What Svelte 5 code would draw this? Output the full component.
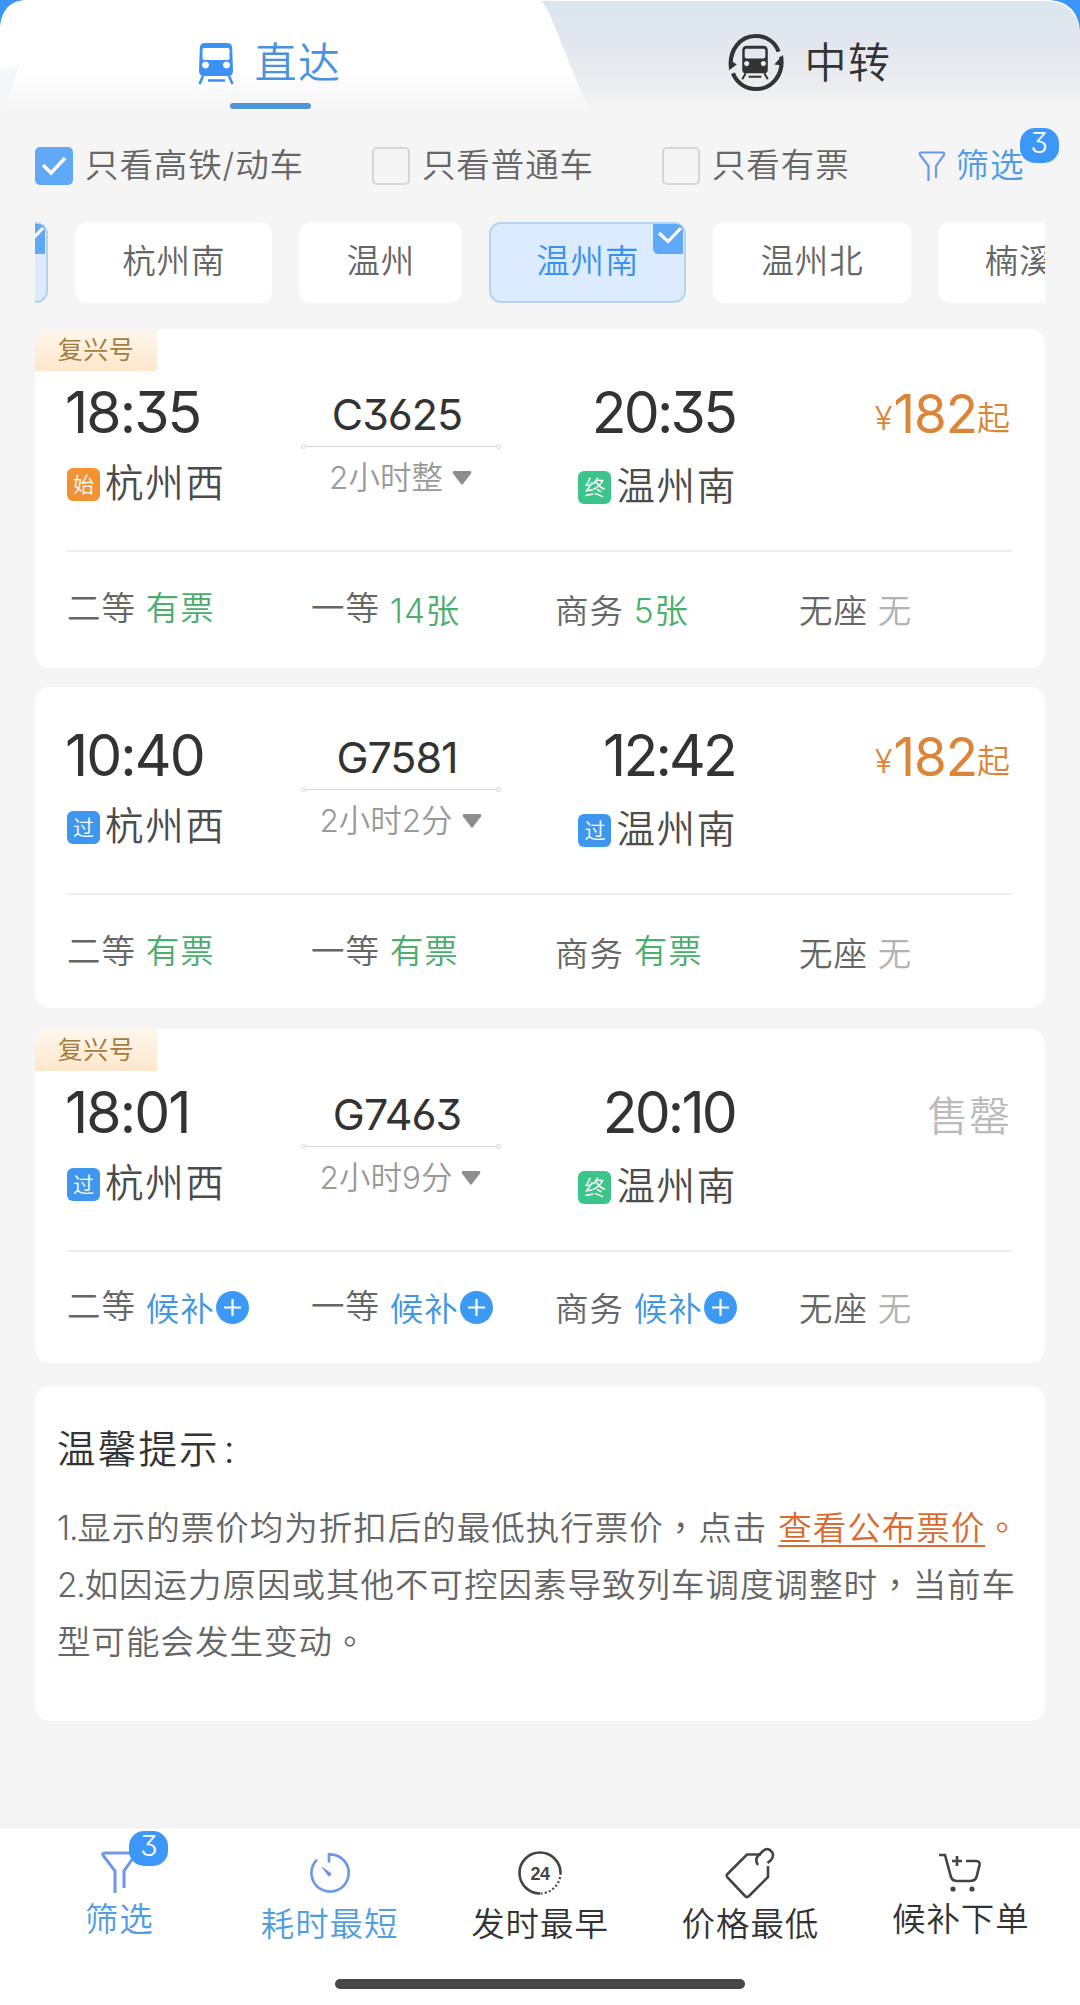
<script>
	const filters = [
		{ label: '只看高铁/动车', checked: true },
		{ label: '只看普通车', checked: false },
		{ label: '只看有票', checked: false },
	];

	const stations = [
		{ name: '杭州西', selected: true },
		{ name: '杭州南' },
		{ name: '温州' },
		{ name: '温州南', selected: true },
		{ name: '温州北' },
		{ name: '楠溪江' },
	];

	const badges = {
		start: '始',
		end: '终',
		pass: '过',
	};

	const trains = [
		{
			tag: '复兴号',
			number: 'C3625',
			duration: '2小时整',
			from: { time: '18:35', name: '杭州西', type: 'start' },
			to: { time: '20:35', name: '温州南', type: 'end' },
			price: 182,
			seats: [
				{ name: '二等', left: '有票', state: 'ok' },
				{ name: '一等', left: '14张', state: 'ok' },
				{ name: '商务', left: '5张', state: 'ok' },
				{ name: '无座', left: '无', state: 'none' },
			],
		},
		{
			number: 'G7581',
			duration: '2小时2分',
			from: { time: '10:40', name: '杭州西', type: 'pass' },
			to: { time: '12:42', name: '温州南', type: 'pass' },
			price: 182,
			seats: [
				{ name: '二等', left: '有票', state: 'ok' },
				{ name: '一等', left: '有票', state: 'ok' },
				{ name: '商务', left: '有票', state: 'ok' },
				{ name: '无座', left: '无', state: 'none' },
			],
		},
		{
			tag: '复兴号',
			number: 'G7463',
			duration: '2小时9分',
			from: { time: '18:01', name: '杭州西', type: 'pass' },
			to: { time: '20:10', name: '温州南', type: 'end' },
			price: null,
			seats: [
				{ name: '二等', left: '候补', state: 'wait' },
				{ name: '一等', left: '候补', state: 'wait' },
				{ name: '商务', left: '候补', state: 'wait' },
				{ name: '无座', left: '无', state: 'none' },
			],
		},
	];

	const tools = [
		{ icon: 'filter', label: '筛选', active: true, raised: true, badge: 3 },
		{ icon: 'timer', label: '耗时最短', active: true },
		{ icon: 'clock', label: '发时最早' },
		{ icon: 'tag', label: '价格最低' },
		{ icon: 'cart', label: '候补下单', raised: true },
	];
</script>

<div class="page">
	<header class="tabs">
		<svg class="tabs-bg" width="1080" height="114" viewBox="0 0 1080 114">
			<defs>
				<linearGradient id="tab-off" x1="0" y1="0" x2="0" y2="1">
					<stop offset="0" stop-color="#dae6ef" />
					<stop offset="0.3" stop-color="#e1e6ee" />
					<stop offset="0.65" stop-color="#e9ebef" />
					<stop offset="1" stop-color="#f5f5f5" />
				</linearGradient>
				<linearGradient id="tab-on" x1="0" y1="0" x2="0" y2="1">
					<stop offset="0.6" stop-color="#ffffff" />
					<stop offset="1" stop-color="#f5f5f5" />
				</linearGradient>
			</defs>
			<rect width="1080" height="60" fill="#3b95f8" />
			<path d="M0 114V28Q2 0 28 0H1050Q1078 2 1080 32V114Z" fill="#fff" />
			<path d="M500 114V1H1046Q1076 2 1080 34V114Z" fill="url(#tab-off)" />
			<path d="M0 114V28Q2 0 28 0H540Q547 6 552 20L590 114Z" fill="url(#tab-on)" />
			<path d="M0 70L20 64L2 114H0Z" fill="#f1f3f6" opacity="0.6" />
		</svg>
		<div class="tab active">
			<svg class="train" width="36" height="42" viewBox="0 0 36 42">
				<path fill="currentColor" fill-rule="evenodd" d="M7 0h22q5 0 5.200 5L35 28q0 5-5 5H6q-5 0-5-5L1.800 5Q2 0 7 0ZM6 5Q4.500 5 4.500 7V15Q4.500 17 6.500 17H29.500Q31.500 17 31.500 15V7Q31.500 5 30 5ZM7.500 18.500a3.500 3.500 0 1 0 .01 0ZM28.500 18.500a3.500 3.500 0 1 0 .01 0Z" />
				<path stroke="currentColor" stroke-width="2.600" d="M5 33L1.500 41M31 33L34.500 41M10 37.500H27" />
			</svg>
			<span>直达</span>
		</div>
		<div class="tab transfer">
			<svg width="56" height="59" viewBox="0 0 57 60">
				<g fill="none" stroke="currentColor" stroke-width="4.200">
					<path d="M3 35C1 18 12 3 28 3C39 3 48 9 51.500 19" />
					<path d="M54 24C57 42 45 57 28.500 57C18 57 9 51 5 41" />
				</g>
				<path fill="currentColor" d="M1 38V27L9 32ZM56 22V33L47 32Z" />
				<path fill="currentColor" fill-rule="evenodd" d="M19 13H36Q40 13 40.500 17V37Q40.500 41 36.500 41H18.500Q14.500 41 14.500 37V17Q15 13 19 13ZM18.500 16Q17 16 17 18V24Q17 26 19 26H36Q38 26 38 24V18Q38 16 36.500 16ZM19 28.500a2.600 2.600 0 1 0 .01 0ZM36 28.500a2.600 2.600 0 1 0 .01 0Z" />
				<path stroke="currentColor" stroke-width="2" d="M18 41L14.500 47M37 41L40.500 47M21 44.500H34" />
			</svg>
			<span>中转</span>
		</div>
	</header>

	<div class="filters">
		{#each filters as filter}
			<label class="filter">
				<span class="box" class:checked={filter.checked}>
					{#if filter.checked}
						<svg width="38" height="38" viewBox="0 0 38 38"><path d="M8 18L16 26L30 11" fill="none" stroke="#fff" stroke-width="3.400" /></svg>
					{/if}
				</span>
				{filter.label}
			</label>
		{/each}
		<div class="more">
			<svg width="28" height="31" viewBox="0 0 28 31"><path d="M10.500 30V15L2 4Q1 1.500 3.500 1.500H24.500Q27 1.500 26 4L18 15V27" fill="none" stroke="#6d97ea" stroke-width="2.200" /></svg>
			<span>筛选</span>
			<i class="count">3</i>
		</div>
	</div>

	<div class="chips">
		{#each stations as station}
			<div class="chip" class:selected={station.selected}>
				{station.name}
				{#if station.selected}
					<svg class="corner" width="30" height="30" viewBox="0 0 30 30">
						<path d="M0 0H24Q30 1 30 7V30H6Q0 30 0 24Z" fill="#60a8f8" />
						<path d="M6 9L15 17.500L28 4" fill="none" stroke="#fff" stroke-width="3.200" />
					</svg>
				{/if}
			</div>
		{/each}
	</div>

	<main>
		{#each trains as train}
			<section class="card train-card" class:tagged={train.tag}>
				{#if train.tag}
					<div class="tag">{train.tag}</div>
				{/if}
				<div class="trip">
					<div class="stop">
						<div class="time">{train.from.time}</div>
						<div class="station">
							<i class="badge {train.from.type}">{badges[train.from.type]}</i>{train.from.name}
						</div>
					</div>
					<div class="route">
						<div class="number">{train.number}</div>
						<div class="line"></div>
						<div class="duration">
							{train.duration}
							<svg width="20" height="14" viewBox="0 0 20 14"><path d="M1.500 0H18.500Q20 1 19 2.500L11 13Q10 14 9 13L1 2.500Q0 1 1.500 0Z" fill="#8e8e8e" /></svg>
						</div>
					</div>
					<div class="stop to">
						<div class="time">{train.to.time}</div>
						<div class="station">
							<i class="badge {train.to.type}">{badges[train.to.type]}</i>{train.to.name}
						</div>
					</div>
					<div class="fare">
						{#if train.price}
							<div class="price"><small>¥</small><b>{train.price}</b><small>起</small></div>
						{:else}
							<div class="sold-out">售罄</div>
						{/if}
					</div>
				</div>
				<div class="seats">
					{#each train.seats as seat}
						<div class="seat">
							<span class:low={seat.name === '商务' || seat.name === '无座'}>{seat.name}</span>
							<span class={seat.state} class:low={seat.left !== '有票'}>{seat.left}</span>
							{#if seat.state === 'wait'}
								<svg class="plus" width="33" height="33" viewBox="0 0 33 33">
									<circle cx="16.500" cy="16.500" r="16.500" fill="#3d99f6" />
									<path d="M16.500 8V25M8 16.500H25" stroke="#fff" stroke-width="2.200" />
								</svg>
							{/if}
						</div>
					{/each}
				</div>
			</section>
		{/each}

		<section class="card tips">
			<h2>温馨提示<span>:</span></h2>
			<p><span class="num">1.</span>显示的票价均为折扣后的最低执行票价<span class="punct">，</span>点击<a href="#fares">查看公布票价</a><span class="punct stop-mark">。</span></p>
			<p><span class="num">2.</span>如因运力原因或其他不可控因素导致列车调度调整时<span class="punct">，</span>当前车型可能会发生变动<span class="punct">。</span></p>
		</section>
	</main>

	<footer>
		<nav>
			{#each tools as tool}
				<div class="tool" class:active={tool.active} class:raised={tool.raised}>
					<div class="tool-icon">
						{#if tool.icon === 'filter'}
							<svg class="funnel" width="36" height="43" viewBox="0 0 36 43"><path d="M14 42V20L2.500 5Q0.500 2 4 2H32Q35.500 2 33.500 5L23 20V37" fill="none" stroke="#6d97ea" stroke-width="3" /></svg>
						{:else if tool.icon === 'timer'}
							<svg class="timer" width="42" height="42" viewBox="0 0 44 44">
								<path d="M9.500 8A19.500 19.500 0 1 0 22 2.500V11" fill="none" stroke="#6d97ea" stroke-width="2.800" />
								<path d="M15 16L24.500 23L22 25.500Z" fill="#6d8fe0" stroke="#6d8fe0" />
							</svg>
						{:else if tool.icon === 'clock'}
							<svg width="44" height="44" viewBox="0 0 44 44">
								<path d="M42.500 22A20.500 20.500 0 1 0 22 42.500" fill="none" stroke="#444" stroke-width="2.600" />
								<path d="M42.500 22A20.500 20.500 0 0 1 22 42.500" fill="none" stroke="#444" stroke-width="2.200" stroke-dasharray="2 2.200" />
								<text x="22" y="28.500" text-anchor="middle">24</text>
							</svg>
						{:else if tool.icon === 'tag'}
							<svg width="50" height="52" viewBox="0 0 50 52">
								<g fill="none" stroke="#444" stroke-width="2.600">
									<path d="M36 7.500H22L2.500 27Q1 28.500 2.500 30.500L20 49Q22 51 24 49L43 30V19" />
									<path d="M33 18Q29 12 34 8L38 4Q43 0 47 5Q49.500 9 46 13L42.500 16" />
								</g>
							</svg>
						{:else}
							<svg width="44" height="40" viewBox="0 0 44 40">
								<g fill="none" stroke="#444" stroke-width="2.600">
									<path d="M0 2H6L12 24Q13.500 28 18 28H31Q36 28 37.500 24L40.500 12Q41 8 37.500 8H27M18 3V13M13 8H23" />
								</g>
								<circle cx="14" cy="36" r="2.600" fill="#444" />
								<circle cx="33" cy="36" r="2.600" fill="#444" />
							</svg>
						{/if}
						{#if tool.badge}
							<i class="count">{tool.badge}</i>
						{/if}
					</div>
					<div class="tool-label">{tool.label}</div>
				</div>
			{/each}
		</nav>
		<div class="home-bar"></div>
	</footer>
</div>

<style>
	:global(body) {
		background: #f5f5f5;
	}

	.page {
		width: 1080px;
		height: 2005px;
		display: flex;
		flex-direction: column;
		overflow: hidden;
		background: #f5f5f5;
		color: #666;
		font-family: Inter, "Noto Sans CJK SC", sans-serif;
		font-size: 33.5px;
		font-weight: 350;
		letter-spacing: 0.9px;
		line-height: 1;
	}

	i {
		font-style: normal;
	}

	svg {
		display: block;
		flex: none;
	}

	/* tabs */
	.tabs {
		position: relative;
		display: flex;
		height: 114px;
	}

	.tabs-bg {
		position: absolute;
		inset: 0;
	}

	.tab {
		position: relative;
		width: 540px;
		height: 109px;
		box-sizing: border-box;
		padding: 16px 0 0;
		display: flex;
		justify-content: center;
		align-items: center;
		gap: 20px;
		font-size: 42px;
		letter-spacing: 1.5px;
		color: #333;
	}

	.tab svg {
		margin-top: 2px;
	}

	.tab span {
		margin-top: 1px;
	}

	.tab.active {
		color: #4893e0;
	}

	.tab.active::after {
		content: "";
		position: absolute;
		left: 230px;
		bottom: 0;
		width: 81px;
		height: 6px;
		border-radius: 3px;
		background: #4f95da;
	}

	.tab.active .train {
		color: #3d90f4;
	}

	.tab.transfer svg {
		margin-top: 0;
	}

	/* filters */
	.filters {
		display: flex;
		align-items: center;
		height: 38px;
		padding: 33px 0 0 35px;
	}

	.filter {
		display: flex;
		align-items: center;
		gap: 12px;
		margin-right: 68px;
		white-space: nowrap;
	}

	.box {
		box-sizing: border-box;
		width: 38px;
		height: 38px;
		border: 2px solid #d6d6d6;
		border-radius: 5px;
	}

	.box.checked {
		border: 0;
		background: #60a8f8;
	}

	.more {
		position: relative;
		display: flex;
		align-items: center;
		gap: 10px;
		color: #4f9be8;
	}

	.count {
		position: absolute;
		width: 39px;
		height: 35px;
		border-radius: 15px;
		background: #3d97f9;
		color: #fff;
		font-size: 29px;
		font-feature-settings: "cv09";
		letter-spacing: 0;
		line-height: 29px;
		text-align: center;
	}

	.more .count {
		left: 102px;
		top: -21px;
	}

	/* station chips */
	.chips {
		display: flex;
		gap: 27px;
		margin: 37px 35px 0;
		height: 81px;
		overflow: hidden;
	}

	.chip {
		position: relative;
		flex: none;
		box-sizing: border-box;
		height: 81px;
		padding: 0 47px;
		border-radius: 12px;
		background: #fff;
		line-height: 78px;
	}

	.chip:first-child {
		margin-left: -184px;
	}

	.chip.selected {
		border: 2px solid #b5d3f1;
		padding: 0 45px;
		background: #dcebfd;
		color: #3c91ee;
		line-height: 74px;
	}

	.corner {
		position: absolute;
		top: 0;
		right: 1px;
	}

	/* cards */
	main {
		padding: 26px 35px 0;
	}

	.card {
		box-sizing: border-box;
		border-radius: 15px;
		background: #fff;
		overflow: hidden;
	}

	.train-card {
		position: relative;
		height: 321px;
		margin-bottom: 21px;
		padding: 42px 33px 0 32px;
	}

	.train-card.tagged {
		height: 339px;
		margin-bottom: 19px;
		padding-top: 57px;
	}

	.train-card.tagged:nth-child(3) {
		height: 334px;
		margin-bottom: 23px;
	}

	.tag {
		position: absolute;
		left: 0;
		top: 0;
		width: 122px;
		height: 42px;
		border-radius: 15px 2px 2px 0;
		background: linear-gradient(#fff7ec, #fde7cb);
		color: #a37d41;
		font-size: 25px;
		font-weight: 400;
		letter-spacing: 0.5px;
		line-height: 43px;
		text-align: center;
	}

	.trip {
		display: flex;
		height: 164px;
		border-bottom: 2px solid #eee;
	}

	.stop {
		width: 220px;
	}

	.time,
	.number,
	.price b {
		font-feature-settings: "cv09", "cv03", "cv04";
		font-weight: 380;
	}

	.time {
		height: 54px;
		margin-left: -2px;
		font-size: 57px;
		line-height: 54px;
		letter-spacing: -1.9px;
		color: #333;
	}

	.station {
		display: flex;
		align-items: center;
		gap: 5px;
		margin-top: 24px;
		color: #4c4c4c;
		font-size: 38.5px;
		letter-spacing: 1.7px;
		white-space: nowrap;
	}

	.badge {
		width: 33px;
		height: 33px;
		margin-top: 3px;
		border-radius: 6px;
		color: #fff;
		font-size: 21px;
		line-height: 34px;
		letter-spacing: 0;
		text-align: center;
	}

	.start {
		background: #f39233;
	}

	.end {
		background: #3cc58a;
	}

	.pass {
		background: #3f96ee;
	}

	.route {
		width: 200px;
		margin-left: 14px;
		text-align: center;
	}

	.number {
		height: 51px;
		padding-top: 4px;
		padding-right: 8px;
		font-size: 43px;
		line-height: 48px;
		letter-spacing: -1px;
		color: #333;
	}

	.line {
		position: relative;
		height: 1px;
		margin: 5px 4px 0;
		background: #d5d5d5;
	}

	.line::before,
	.line::after {
		content: "";
		position: absolute;
		top: -2px;
		left: -4px;
		width: 3px;
		height: 3px;
		border: 1px solid #d5d5d5;
		border-radius: 50%;
	}

	.line::after {
		left: auto;
		right: -4px;
	}

	.duration {
		display: flex;
		justify-content: center;
		align-items: center;
		gap: 9px;
		margin: 15px 1px 0 0;
		color: #999;
		font-size: 31.5px;
		letter-spacing: 0;
		white-space: nowrap;
	}

	.stop.to {
		width: 234px;
		display: flex;
		flex-direction: column;
		align-items: flex-end;
	}

	.stop.to .time {
		letter-spacing: -2.8px;
	}

	.stop.to .station {
		margin-top: 27px;
		margin-right: -2px;
	}

	.fare {
		flex: 1;
		display: flex;
		justify-content: flex-end;
		padding-right: 1px;
		color: #dc8438;
	}

	.price {
		height: 60px;
		margin-top: -2px;
		line-height: 60px;
		white-space: nowrap;
	}

	.price b {
		font-size: 53px;
		letter-spacing: -1px;
	}

	.price small {
		font-size: 33px;
		line-height: 0;
		vertical-align: 3px;
	}

	.sold-out {
		padding-top: 10px;
		color: #bbb;
		font-size: 41px;
	}

	.seats {
		display: grid;
		grid-template-columns: repeat(4, 244px);
		padding-top: 38px;
	}

	.tagged:nth-child(3) .seats {
		padding-top: 36px;
	}

	.seat {
		display: flex;
		align-items: center;
		height: 38px;
		white-space: nowrap;
	}

	.seat span + span {
		margin-left: 10px;
	}

	.low {
		padding-top: 6px;
	}

	.ok {
		color: #4bae6c;
	}

	.none {
		color: #b3b3b3;
	}

	.wait {
		color: #4096e6;
	}

	.plus {
		margin: 1px 0 0 1px;
	}

	/* tips */
	.tips {
		height: 335px;
		padding: 44px 18px 0 22px;
	}

	h2 {
		margin: 0 0 31px;
		color: #333;
		font-size: 38.5px;
		font-weight: 350;
		letter-spacing: 2.2px;
	}

	h2 span {
		margin-left: 4px;
	}

	p {
		margin: 0;
		line-height: 57px;
		letter-spacing: 1px;
	}

	.num {
		letter-spacing: -1.2px;
	}

	.punct {
		font-family: "Noto Sans CJK TC", sans-serif;
		line-height: 0;
	}

	a {
		margin-left: 11px;
		color: #d96a30;
		text-decoration: underline;
		text-decoration-thickness: 2px;
		text-underline-offset: 5px;
	}

	.stop-mark {
		color: #d96a30;
	}

	/* bottom bar */
	footer {
		margin-top: auto;
		height: 177px;
		border-top: 1px solid #ececec;
		background: #fff;
	}

	nav {
		display: flex;
		height: 151px;
		padding: 0 14px;
	}

	.tool {
		flex: 1;
		display: flex;
		flex-direction: column;
		align-items: center;
		color: #333;
	}

	.tool.active {
		color: #519de0;
	}

	.tool-icon {
		position: relative;
		display: flex;
		justify-content: center;
		align-items: center;
		width: 60px;
		height: 89px;
	}

	.tool-icon .count {
		left: 40px;
		top: 3px;
	}

	.timer {
		margin-right: 2px;
	}

	.tool-label {
		margin-top: -9px;
	}

	.tool.raised .tool-label {
		margin-top: -14px;
	}

	.tool-icon text {
		fill: #444;
		font: 700 18px "Liberation Sans", sans-serif;
		letter-spacing: -0.5px;
	}

	.home-bar {
		width: 410px;
		height: 10px;
		margin: 0 auto;
		border-radius: 5px;
		background: #474747;
	}
</style>
